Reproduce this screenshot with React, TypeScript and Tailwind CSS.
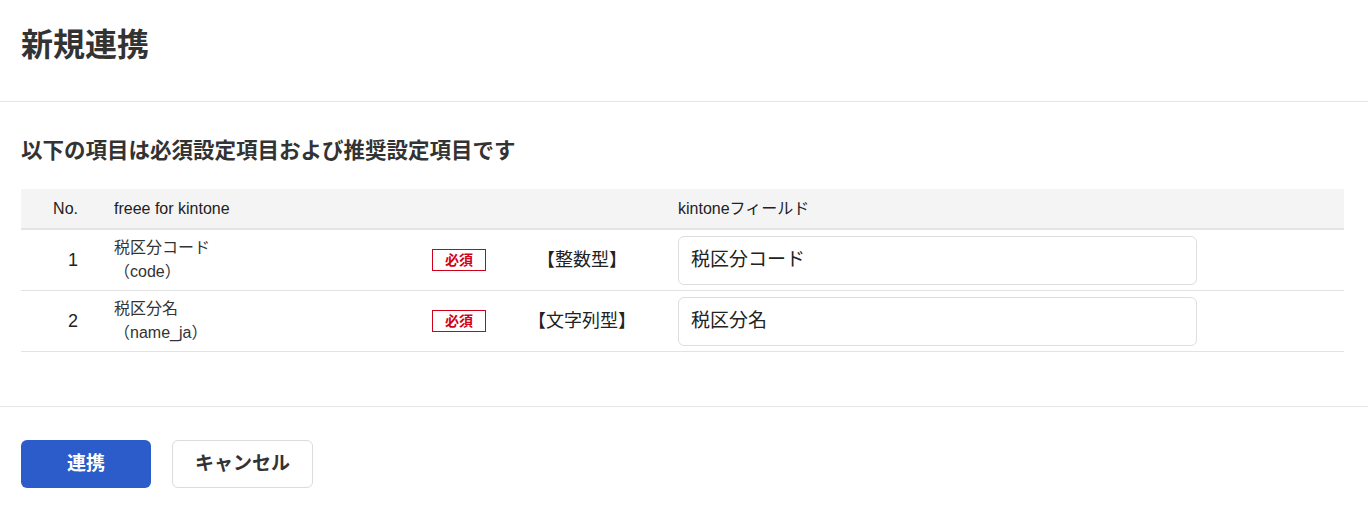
import React from "react";

const rows = [
  { no: 1, label: "税区分コード", key: "（code）", type: "【整数型】", value: "税区分コード" },
  { no: 2, label: "税区分名", key: "（name_ja）", type: "【文字列型】", value: "税区分名" },
];

export default function App() {
  return (
    <div
      className="w-[1368px] h-[511px] bg-white text-[#333]"
      style={{ fontFamily: '"Liberation Sans", "Noto Sans CJK JP", sans-serif' }}
    >
      <div className="h-[102px] px-[21px] pt-[24px] border-b border-[#e6e6e6]">
        <h1 className="text-[32px] leading-[42px] font-bold text-[#333]">新規連携</h1>
      </div>
      <div className="px-[21px] pt-[35px] h-[305px] border-b border-[#e6e6e6]">
        <h2 className="text-[21.5px] leading-[28px] font-bold text-[#333]">以下の項目は必須設定項目および推奨設定項目です</h2>
        <div className="mt-[24px] w-[1323px]">
          <div className="flex items-center h-[41px] bg-[#f5f4f5] border-b-2 border-[#e3e3e3] text-[16px] text-[#222]">
            <div className="w-[57px] text-right">No.</div>
            <div className="w-[600px] pl-[36px]">freee for kintone</div>
            <div>kintoneフィールド</div>
          </div>
          {rows.map((r) => (
            <div key={r.no} className="flex items-center h-[61px] border-b border-[#e3e3e3]">
              <div className="w-[57px] text-right text-[18px] text-[#222]">{r.no}</div>
              <div className="w-[354px] pl-[36px] text-[16px] leading-[24px] text-[#333]">
                <div>{r.label}</div>
                <div>{r.key}</div>
              </div>
              <div className="w-[54px] h-[22px] border border-[#d0021b] text-[#d0021b] text-[14px] font-bold flex items-center justify-center">
                必須
              </div>
              <div className="w-[192px] text-center text-[18px] text-[#222]">{r.type}</div>
              <div className="w-[519px] h-[49px] border border-[#dedede] rounded-[6px] flex items-center px-[12px] text-[19px] text-[#222]">
                {r.value}
              </div>
            </div>
          ))}
        </div>
      </div>
      <div className="px-[21px] pt-[33px] flex gap-[21px]">
        <button className="w-[130px] h-[48px] rounded-[6px] bg-[#2b5cc9] text-white text-[19px] font-bold">連携</button>
        <button className="w-[141px] h-[48px] rounded-[6px] bg-white border border-[#dcdcdc] text-[#333] text-[19px] font-bold">キャンセル</button>
      </div>
    </div>
  );
}
